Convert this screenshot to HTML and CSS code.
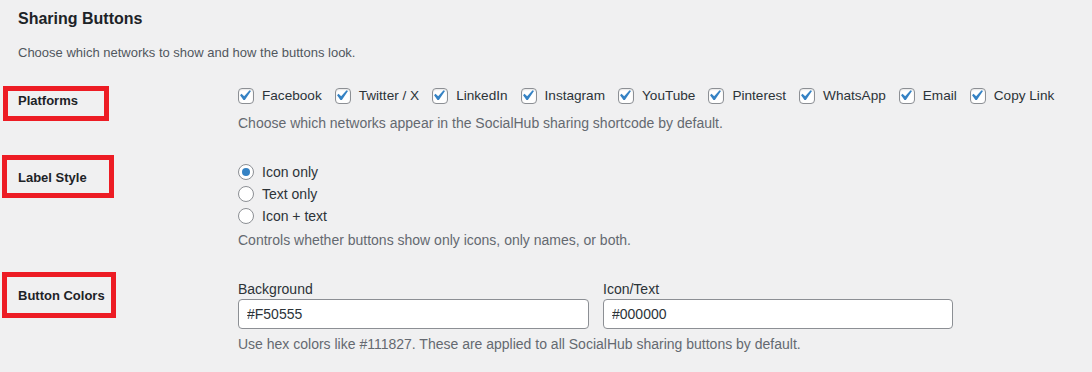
FILE: index.html
```html
<!DOCTYPE html>
<html lang="en">

<head>
  <meta charset="UTF-8">
  <meta name="viewport" content="width=device-width, initial-scale=1.0">
  <title>Sharing Buttons</title>

  <link rel="stylesheet" href="styles.css">
</head>

<body>

  <div class="wrap">
    <h2>Sharing Buttons</h2>
    <p class="intro">Choose which networks to show and how the buttons look.</p>

    <div class="form-table">
      <div class="row">
        <div class="th">Platforms</div>
        <div class="td">
          <div class="checks">
            <label class="check"><span class="cb"><svg viewBox="0 0 20 20"><path d="M14.83 4.89l1.34.94-5.81 8.38H9.02L5.78 9.670l1.34-1.25 2.57 2.4z"/></svg></span>Facebook</label>
            <label class="check"><span class="cb"><svg viewBox="0 0 20 20"><path d="M14.83 4.89l1.34.94-5.81 8.38H9.02L5.78 9.670l1.34-1.25 2.57 2.4z"/></svg></span>Twitter / X</label>
            <label class="check"><span class="cb"><svg viewBox="0 0 20 20"><path d="M14.83 4.89l1.34.94-5.81 8.38H9.02L5.78 9.670l1.34-1.25 2.57 2.4z"/></svg></span>LinkedIn</label>
            <label class="check"><span class="cb"><svg viewBox="0 0 20 20"><path d="M14.83 4.89l1.34.94-5.81 8.38H9.02L5.78 9.670l1.34-1.25 2.57 2.4z"/></svg></span>Instagram</label>
            <label class="check"><span class="cb"><svg viewBox="0 0 20 20"><path d="M14.83 4.89l1.34.94-5.81 8.38H9.02L5.78 9.670l1.34-1.25 2.57 2.4z"/></svg></span>YouTube</label>
            <label class="check"><span class="cb"><svg viewBox="0 0 20 20"><path d="M14.83 4.89l1.34.94-5.81 8.38H9.02L5.78 9.670l1.34-1.25 2.57 2.4z"/></svg></span>Pinterest</label>
            <label class="check"><span class="cb"><svg viewBox="0 0 20 20"><path d="M14.83 4.89l1.34.94-5.81 8.38H9.02L5.78 9.670l1.34-1.25 2.57 2.4z"/></svg></span>WhatsApp</label>
            <label class="check"><span class="cb"><svg viewBox="0 0 20 20"><path d="M14.83 4.89l1.34.94-5.81 8.38H9.02L5.78 9.670l1.34-1.25 2.57 2.4z"/></svg></span>Email</label>
            <label class="check"><span class="cb"><svg viewBox="0 0 20 20"><path d="M14.83 4.89l1.34.94-5.81 8.38H9.02L5.78 9.670l1.34-1.25 2.57 2.4z"/></svg></span>Copy Link</label>
          </div>
          <p class="description desc-platforms">Choose which networks appear in the SocialHub sharing shortcode by default.</p>
        </div>
      </div>

      <div class="row row-style">
        <div class="th">Label Style</div>
        <div class="td">
          <div class="radios">
            <label class="radio"><span class="rb checked"></span>Icon only</label>
            <label class="radio"><span class="rb"></span>Text only</label>
            <label class="radio"><span class="rb"></span>Icon + text</label>
          </div>
          <p class="description">Controls whether buttons show only icons, only names, or both.</p>
        </div>
      </div>

      <div class="row">
        <div class="th">Button Colors</div>
        <div class="td">
          <div class="colors">
            <div class="color-field">
              <label>Background</label>
              <input type="text" value="#F50555">
            </div>
            <div class="color-field">
              <label>Icon/Text</label>
              <input type="text" value="#000000">
            </div>
          </div>
          <p class="description">Use hex colors like #111827. These are applied to all SocialHub sharing buttons by default.</p>
        </div>
      </div>
    </div>
  </div>

  <!-- marcas de revision -->
  <span class="mark mark-1"></span>
  <span class="mark mark-2"></span>
  <span class="mark mark-3"></span>

</body>

</html>
```

FILE: styles.css
```css
body {
  margin: 0;
  background: #f0f0f1;
  color: #3c434a;
  font-family: "Liberation Sans", Arial, sans-serif;
  font-size: 13px;
  position: relative;
  overflow: hidden;
}

.wrap {
  padding: 8px 18px 0;
}

.wrap h2 {
  margin: 0;
  font-size: 16px;
  line-height: 22px;
  font-weight: 700;
  color: #1d2327;
}

.intro {
  margin: 13px 0 0;
  line-height: 20px;
  color: #50575e;
}

.form-table {
  margin-top: 8px;
}

.row {
  display: grid;
  grid-template-columns: 220px 1fr;
}

.th {
  padding-top: 20px;
  font-size: 13px;
  font-weight: 700;
  line-height: 19px;
  color: #1d2327;
}

.td {
  padding: 15px 0;
  font-size: 14px;
}

.row-style .td {
  padding-bottom: 16px;
}

.description {
  margin: 5px 0 0;
  font-size: 14px;
  line-height: 20px;
  color: #646970;
}

.desc-platforms {
  margin-top: 7px;
}

/* checkboxes */
.checks {
  display: flex;
  gap: 13px;
  line-height: 20px;
}

.check {
  display: flex;
  align-items: center;
  gap: 8px;
  font-size: 13.6px;
  color: #2c3338;
}

.cb {
  position: relative;
  width: 16px;
  height: 16px;
  box-sizing: border-box;
  border: 1px solid #8c8f94;
  border-radius: 4px;
  background: #fff;
  box-shadow: inset 0 1px 2px rgba(0, 0, 0, .1);
}

.cb svg {
  position: absolute;
  top: -4px;
  left: -5px;
  width: 21px;
  height: 21px;
  fill: #3582c4;
}

/* radios */
.radios {
  display: flex;
  flex-direction: column;
  gap: 4px;
}

.radio {
  display: flex;
  align-items: center;
  gap: 8px;
  line-height: 18px;
  color: #2c3338;
}

.rb {
  width: 16px;
  height: 16px;
  box-sizing: border-box;
  border: 1px solid #8c8f94;
  border-radius: 50%;
  background: #fff;
  display: flex;
  align-items: center;
  justify-content: center;
}

.rb.checked::before {
  content: "";
  width: 8px;
  height: 8px;
  border-radius: 50%;
  background: #3582c4;
}

/* colores */
.colors {
  display: grid;
  grid-template-columns: 351px 350px;
  gap: 14px;
}

.color-field label {
  display: block;
  line-height: 16px;
  margin-bottom: 2px;
  color: #2c3338;
}

.color-field input {
  display: block;
  width: 100%;
  height: 30px;
  box-sizing: border-box;
  padding: 0 8px;
  border: 1px solid #8c8f94;
  border-radius: 4px;
  background: #fff;
  font-family: inherit;
  font-size: 14px;
  color: #2c3338;
  outline: none;
}

/* recuadros rojos */
.mark {
  position: absolute;
  box-sizing: border-box;
  border: 5px solid #ed1c24;
}

.mark-1 {
  left: 3px;
  top: 86px;
  width: 106px;
  height: 35px;
}

.mark-2 {
  left: 2px;
  top: 155px;
  width: 112px;
  height: 43px;
}

.mark-3 {
  left: 2px;
  top: 272px;
  width: 114px;
  height: 46px;
}
```
